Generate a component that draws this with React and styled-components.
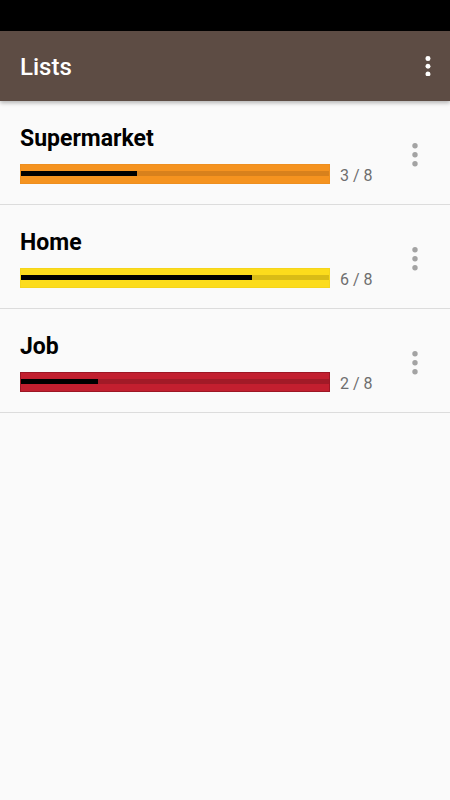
import React from "react";
import styled, { createGlobalStyle } from "styled-components";

const Global = createGlobalStyle`
  html, body { margin: 0; padding: 0; background: #fafafa; }
  body { font-family: Roboto, "Noto Sans", "Liberation Sans", sans-serif; }
  * { box-sizing: border-box; }
`;

const Screen = styled.div`
  width: 450px;
  min-height: 800px;
  background: #fafafa;
  display: flex;
  flex-direction: column;
`;

const StatusBar = styled.div`
  height: 31px;
  background: #000;
`;

const AppBar = styled.header`
  height: 70px;
  background: #5d4c44;
  display: flex;
  align-items: center;
  justify-content: space-between;
  padding: 0 16px 0 20px;
  box-shadow: 0 2px 4px rgba(0, 0, 0, 0.28);
  position: relative;
  z-index: 1;
`;

const Title = styled.h1`
  margin: 0;
  color: #fff;
  font-size: 24px;
  font-weight: 500;
  line-height: 28px;
  padding-top: 2px;
`;

const IconButton = styled.div`
  width: 12px;
  height: 24px;
  display: flex;
  align-items: center;
  justify-content: center;
`;

const List = styled.div`
  display: flex;
  flex-direction: column;
`;

const Row = styled.div`
  display: flex;
  align-items: center;
  padding: 25px 23px 20px 20px;
  border-bottom: 1px solid #dcdcdc;
`;

const Content = styled.div`
  flex: 1;
  display: flex;
  flex-direction: column;
  gap: 12px;
`;

const Name = styled.div`
  font-size: 23px;
  font-weight: 700;
  line-height: 26px;
  color: #000;
`;

const BarLine = styled.div`
  display: flex;
  align-items: center;
  gap: 10px;
  height: 20px;
`;

const Bar = styled.div`
  width: 310px;
  height: 20px;
  background: ${(p) => p.$fill};
  border: 1px solid ${(p) => p.$border};
  display: flex;
  align-items: center;
`;

const Track = styled.div`
  width: 100%;
  height: 5px;
  margin-top: -1px;
  background: ${(p) => p.$track};
  display: flex;
`;

const Progress = styled.div`
  height: 100%;
  background: #000;
`;

const Count = styled.span`
  font-size: 16px;
  color: #6e6e6e;
  line-height: 20px;
  padding-top: 4px;
`;

const MenuIcon = styled.div`
  width: 24px;
  height: 24px;
  display: flex;
  align-items: center;
  justify-content: center;
`;

const Dots = ({ color, r, gap, w }) => (
  <svg width={w} height={gap * 2 + r * 2} viewBox={`0 0 ${w} ${gap * 2 + r * 2}`}>
    {[0, 1, 2].map((i) => (
      <circle key={i} cx={w / 2} cy={r + i * gap} r={r} fill={color} />
    ))}
  </svg>
);

const lists = [
  { name: "Supermarket", done: 3, total: 8, fill: "#f5931f", border: "#ee8f1f", track: "#d8811c" },
  { name: "Home", done: 6, total: 8, fill: "#fcdc1c", border: "#f5d51b", track: "#d9bc16" },
  { name: "Job", done: 2, total: 8, fill: "#c21f2f", border: "#9c1624", track: "#a11a27" },
];

export default function App() {
  return (
    <Screen>
      <Global />
      <StatusBar />
      <AppBar>
        <Title>Lists</Title>
        <IconButton>
          <Dots color="#fff" r={2.5} gap={7.7} w={6} />
        </IconButton>
      </AppBar>
      <List>
        {lists.map((l) => (
          <Row key={l.name}>
            <Content>
              <Name>{l.name}</Name>
              <BarLine>
                <Bar $fill={l.fill} $border={l.border}>
                  <Track $track={l.track}>
                    <Progress style={{ width: `${(l.done / l.total) * 100}%` }} />
                  </Track>
                </Bar>
                <Count>
                  {l.done} / {l.total}
                </Count>
              </BarLine>
            </Content>
            <MenuIcon>
              <Dots color="#a3a3a3" r={2.7} gap={9} w={6} />
            </MenuIcon>
          </Row>
        ))}
      </List>
    </Screen>
  );
}
